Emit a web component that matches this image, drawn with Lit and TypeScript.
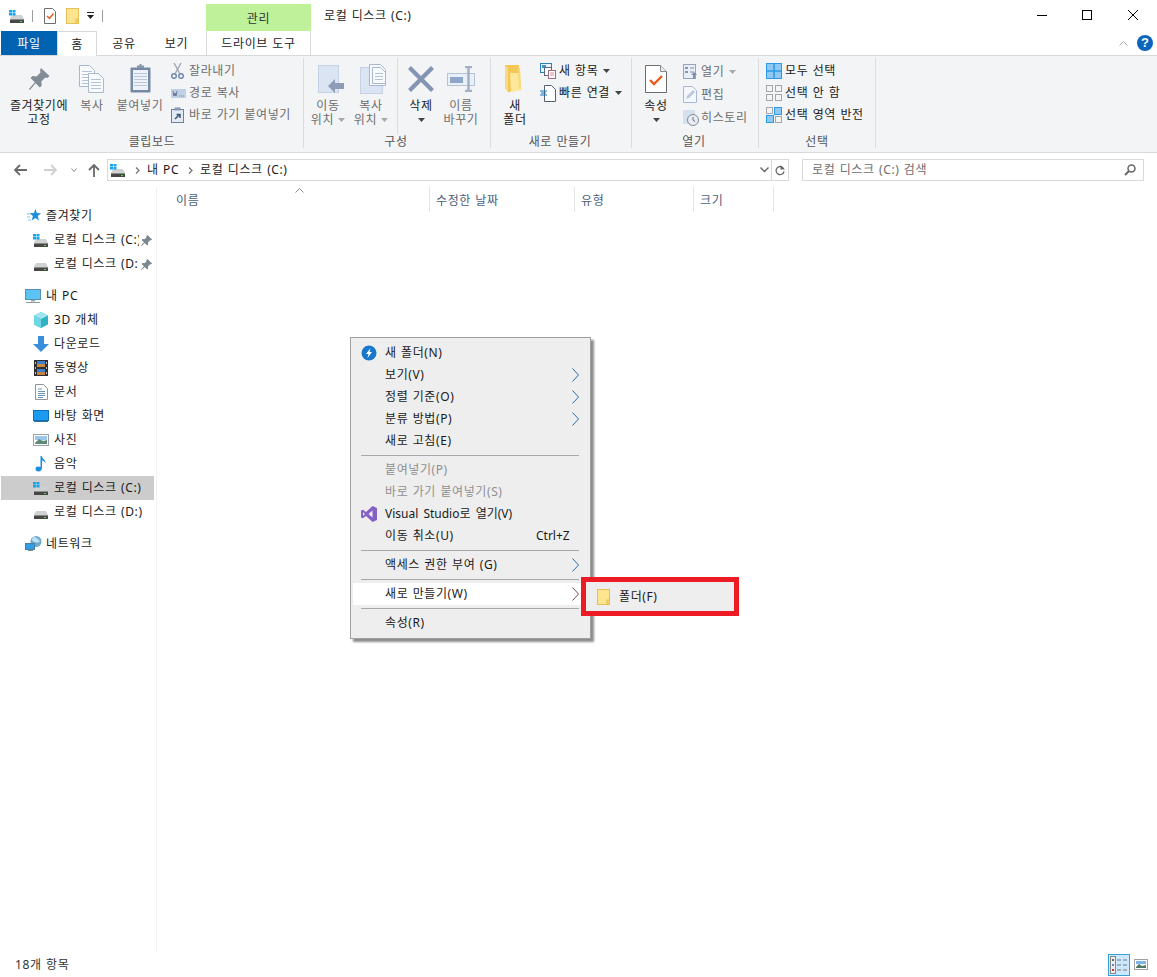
import { LitElement, html, css, svg, nothing } from "lit";
import { customElement } from "lit/decorators.js";

const ic = (w: number, h: number, body: unknown, vb?: string) =>
  html`<svg class="i" width=${w} height=${h} viewBox=${vb ?? `0 0 ${w} ${h}`}>${body}</svg>`;

const hdd = (win: boolean) => ic(16, 16, svg`
  <path d="M3 7h10l2 4H1z" fill="#cfd1d3"/><rect x="1" y="11" width="14" height="4" fill="#474747"/><rect x="1" y="11" width="14" height="1" fill="#8b8b8b"/>
  <rect x="11" y="13" width="2" height="1" fill="#3ee03e"/>
  ${win ? svg`<g fill="#16a3f2"><rect x="0" y="2" width="3" height="2.500"/><rect x="3.500" y="2" width="3" height="2.500"/><rect x="0" y="5" width="3" height="2.500"/><rect x="3.500" y="5" width="3" height="2.500"/></g>` : nothing}`);

const star = ic(16, 16, svg`<path d="M10.500 1l1.400 4 4.100.2-3.200 2.800 1.200 4.400-3.500-2.400-3.800 2.400 1.200-4.400-3.400-2.800 4.400-.2z" fill="#1f8fdc"/><path d="M2 6h3M2 9h3M3 12h3" stroke="#7cc3ef" stroke-width="1"/>`);
const pc = ic(17, 16, svg`<rect x=".5" y="1.500" width="15" height="10" fill="#5cc4f5" stroke="#5a8fb0"/><rect x="6" y="12" width="4" height="1.500" fill="#9aa7b0"/><rect x="1" y="14" width="14" height="1" fill="#8c9aa5"/>`);
const cube = ic(16, 16, svg`<path d="M8 0l7 3.500v9L8 16l-7-3.500v-9z" fill="#2fb3c4"/><path d="M8 0l7 3.500L8 7 1 3.500z" fill="#9fe6ee"/><path d="M1 3.500L8 7v9l-7-3.500z" fill="#6fd7e3"/>`);
const dl = ic(16, 16, svg`<path d="M5 0h6v8h5l-8 8-8-8h5z" fill="#3a8fdd"/>`);
const film = ic(14, 16, svg`<rect width="14" height="16" fill="#2f2f2f"/><rect x="3" y="1" width="8" height="6" fill="#d08a3e"/><rect x="3" y="1" width="8" height="3" fill="#3f7fd0"/><rect x="3" y="9" width="8" height="6" fill="#3f7fd0"/><rect x="3" y="12" width="8" height="3" fill="#c8803a"/><g fill="#bbb"><rect x="1" y="2" width="1" height="2"/><rect x="1" y="7" width="1" height="2"/><rect x="1" y="12" width="1" height="2"/><rect x="12" y="2" width="1" height="2"/><rect x="12" y="7" width="1" height="2"/><rect x="12" y="12" width="1" height="2"/></g>`);
const docu = ic(13, 16, svg`<path d="M.5.5h8l4 4v11H.5z" fill="#fff" stroke="#8e9499"/><path d="M3 5h4M3 7.500h7M3 9.500h7M3 11.500h7M3 13.500h5" stroke="#6a94b8"/>`);
const desk = ic(16, 16, svg`<rect x=".5" y="2.500" width="15" height="10" fill="#1c9aef" stroke="#0f6fb4"/><rect x="1" y="13" width="14" height="1" fill="#3a6f98"/>`);
const pics = ic(16, 12, svg`<rect x=".5" y=".5" width="15" height="11" fill="#fff" stroke="#98a0a8"/><rect x="2" y="2" width="12" height="4" fill="#9bc6ee"/><path d="M2 9l4-4 4 2 4-1v4H2z" fill="#5e8a78"/>`);
const note = ic(12, 16, svg`<ellipse cx="3.500" cy="13" rx="3" ry="2.400" fill="#1c8fe0"/><path d="M5.500 13V0h1.400c.3 3 4 3.500 3.600 7.500-.7-2-2.300-2.700-3.500-3V13z" fill="#1c8fe0"/>`);
const net = ic(17, 16, svg`<circle cx="11" cy="5.500" r="5.500" fill="#6ea9cf"/><path d="M8 1c3 0 6 2 7 5-3 1-7 .5-8-2z" fill="#bfe0ef"/><rect x=".5" y="7.500" width="9" height="6" fill="#2e9ee6" stroke="#4b7ea5"/><rect x="3" y="14" width="5" height="1" fill="#7f8d98"/>`);
const pinSm = ic(11, 11, svg`<path d="M6.500 0L11 4.500l-1 1-1-.2-2 2.200.2 2-1 1-2.500-2.500L.6 11 0 10.400l3-3.100L.5 5l1-1 2 .2 2-2L5.500 1z" fill="#7b8692"/>`);

const pin = ic(22, 24, svg`<path d="M13 1l8.500 8-2 2-2.200-.5-4 4 .5 4-2 2-4.300-4.300L2 23l-1-1 5.800-6.800L2.500 11l2-2 4 .5 4-4L12 3.200z" fill="#828c97"/>`);
const page = (x: number, y: number, w: number, h: number) => svg`<path d="M${x + .5} ${y + .5}h${w - 6}l5 5v${h - 6}h-${w - 1}z" fill="#f8fafd" stroke="#a9b8d0"/>${[6, 9, 12, 15, 18].filter((d) => d < h - 2).map((d) => svg`<path d="M${x + 3} ${y + d + .5}h${w - 6}" stroke="#b6c2d6"/>`)}`;
const copy = ic(26, 28, svg`${page(0, 0, 16, 22)}${page(9, 8, 16, 20)}`);
const clip = ic(21, 29, svg`<rect x="0.500" y="3.500" width="20" height="25" rx="1" fill="#7889a5"/><rect x="3" y="6" width="15" height="20" fill="#eef2f8"/><path d="M4 9.500h13M4 12.500h13M4 15.500h13M4 18.500h13M4 21.500h13" stroke="#bac7da"/><path d="M7 4V1.500h2.500V0h2v1.500H14V4z" fill="#8796ad"/>`);
const scissors = ic(13, 16, svg`<circle cx="3" cy="13" r="2.300" fill="none" stroke="#6d87ad" stroke-width="1.500"/><circle cx="10" cy="13" r="2.300" fill="none" stroke="#6d87ad" stroke-width="1.500"/><path d="M4 11L10 0M9 11L3 0" stroke="#9aa3ad" stroke-width="1.300"/>`);
const pathcopy = ic(15, 9, svg`<rect width="15" height="9" fill="#bfcfe6"/><path d="M2 2l1 5 1-3 1 3 1-5M8 7h.8M10 7h.8M12 7h.8" stroke="#53657f" fill="none" stroke-width=".8"/>`);
const shortcut = ic(13, 16, svg`<rect x=".5" y="2.500" width="12" height="13" fill="#e4eaf3" stroke="#6f7f99"/><rect x="3.500" y=".5" width="6" height="3" fill="#8798b0"/><path d="M4 12l4-4M5.500 7.500H9V11" stroke="#3f5674" stroke-width="1.500" fill="none"/>`);
const move = ic(34, 28, svg`<rect x="1.500" y=".5" width="20" height="27" fill="#dbe4f2" stroke="#c5d1e4"/><path d="M11 21l7-7v4h9v6h-9v4z" fill="#8d9db6"/>`, "-6 0 34 28");
const copyto = ic(34, 30, svg`<rect x="0.500" y="3.500" width="22" height="26" fill="#dbe4f2" stroke="#c5d1e4"/>${page(9, 0, 17, 22)}${page(12, 3, 14, 17)}`, "-6 0 34 30");
const del = ic(26, 26, svg`<path d="M3 0l10 10L23 0l3 3-10 10 10 10-3 3-10-10L3 26l-3-3 10-10L0 3z" fill="#8594b2"/>`);
const rename = ic(28, 26, svg`<rect x=".5" y="7.500" width="27" height="12" fill="#eaf0f8" stroke="#b4c2d8"/><rect x="3" y="11" width="13" height="6" fill="#8fa6c8"/><path d="M18 1h7M21.500 1v24M18 25h7" stroke="#a3b0c6" stroke-width="2.500" fill="none"/>`);
const bigFolder = ic(20, 27, svg`<path d="M0 0h14v4l1 21L3 27 0 23z" fill="#f3c655"/><path d="M5 8h9l1-4 1 20 3 .5L6 27z" fill="#fce79a"/><path d="M0 0v23l3 4V3z" fill="#f6d98a"/><path d="M13 3h2l1 21h-2z" fill="#f8d874"/>`);
const newItem = ic(16, 16, svg`<rect x=".5" y=".5" width="11" height="9" fill="#e8f3fb" stroke="#2d7fb8"/><rect x="2" y="2" width="4" height="3" fill="#3e96cf"/><rect x="4.500" y="4.500" width="7" height="8" fill="#fff" stroke="#59687c"/><rect x="8.500" y="7.500" width="7" height="8" fill="#fff" stroke="#a06a78"/><path d="M10 10h4M10 12h4" stroke="#d48a9a"/>`);
const quick = ic(16, 17, svg`<path d="M4.500.5h7l4 4v12h-11z" fill="#fff" stroke="#55606e"/><path d="M0 6h7M1 8h5M0 10h7" stroke="#1b78c0"/>`);
const props = ic(22, 28, svg`<path d="M.5.5h15l6 6v21H.5z" fill="#fff" stroke="#6d6d6d"/><path d="M15.500.5v6h6" fill="#eee" stroke="#8a8a8a"/><path d="M5 15l4 4 8-8" stroke="#ee5a1c" stroke-width="2.400" fill="none"/>`);
const openI = ic(15, 16, svg`<rect x=".5" y=".5" width="12" height="14" fill="#e9eef6" stroke="#93a5c0"/><rect x="2" y="3" width="3" height="2" fill="#8094b3"/><rect x="2" y="7" width="3" height="2" fill="#8094b3"/><path d="M7 4h4M7 8h4" stroke="#8094b3"/><path d="M10 15v-4H8l3-3 3 3h-2v4z" fill="#7d8fa9"/>`);
const editI = ic(14, 17, svg`<path d="M.5.5h9l4 4v12H.5z" fill="#f4f7fb" stroke="#a7b7cf"/><path d="M3 13l1-3 6-6 2 2-6 6z" fill="#bcc9dc"/>`);
const histI = ic(16, 16, svg`<rect x="0" y="0" width="12" height="14" fill="#d6dfec"/><circle cx="10" cy="10" r="5.500" fill="#e9edf2" stroke="#7f8b99"/><path d="M10 7v3l2 1.500" stroke="#5f6b79" fill="none"/>`);
const cells = (fills: string[], stroke: string) => ic(16, 16, svg`${[[0, 0], [9, 0], [0, 9], [9, 9]].map(([x, y], n) => svg`<rect x=${x + .5} y=${y + .5} width="6" height="6" fill=${fills[n]} stroke=${stroke}/>`)}`);
const selAll = ic(16, 16, svg`<rect x=".5" y=".5" width="15" height="15" fill="#8fc8f2" stroke="#2b9be8"/><path d="M8 0v16M0 8h16" stroke="#2b9be8" stroke-width="1.500"/>`);
const selNone = cells(["#f3f4f6", "#f3f4f6", "#f3f4f6", "#f3f4f6"], "#a6a6a6");
const selInv = ic(16, 16, svg`<rect x="8.500" y=".5" width="7" height="7" fill="#8fc8f2" stroke="#2b9be8"/><rect x=".5" y="8.500" width="7" height="7" fill="#8fc8f2" stroke="#2b9be8"/><rect x=".5" y=".5" width="6" height="6" fill="#f3f4f6" stroke="#a6a6a6"/><rect x="9.500" y="9.500" width="6" height="6" fill="#f3f4f6" stroke="#a6a6a6"/>`);

const checkDoc = ic(12, 16, svg`<path d="M.5.5h8l3 3v12H.5z" fill="#fff" stroke="#6d6d6d"/><path d="M3 8l2.500 2.500L9.500 5.500" stroke="#ee5a1c" stroke-width="1.500" fill="none"/>`);
const smFolder = ic(13, 16, svg`<rect x=".5" y=".5" width="12" height="15" fill="#fde58f" stroke="#e6bf55"/><rect x="10" y="11" width="2.500" height="4.500" fill="#f7d36a" stroke="#e6bf55"/>`);
const caret = ic(7, 4, svg`<path d="M0 0h7L3.500 4z" fill="#444"/>`);
const caretG = ic(7, 4, svg`<path d="M0 0h7L3.500 4z" fill="#a8a8a8"/>`);
const qCaret = ic(7, 7, svg`<rect y="0" width="7" height="1" fill="#222"/><path d="M0 3h7L3.500 7z" fill="#222"/>`);
const chevR = ic(5, 7, svg`<path d="M1 .5L4 3.500 1 6.500" stroke="#777" stroke-width="1.300" fill="none"/>`);
const menuArrow = ic(7, 14, svg`<path d="M.5.5L6.500 7 .5 13.500" stroke="#2c6aa8" stroke-width="1" fill="none"/>`);
const hotArrow = ic(7, 14, svg`<path d="M.5.5L6.500 7 .5 13.500" stroke="#7a4a4a" stroke-width="1" fill="none"/>`);
const boltI = ic(16, 16, svg`<circle cx="8" cy="8" r="7.500" fill="#1677cc"/><path d="M9.500 3L5 9h2.500L6.500 13 11 7H8.500z" fill="#fff"/>`);
const vsI = ic(16, 16, svg`<path d="M11.500 0L16 2v12l-4.500 2L5 10l-3 2.300L0 11.500v-7L2 3.700 5 6zM11.500 4.500L7.500 8l4 3.500zM2 6.200v3.600L4 8z" fill="#8661c5"/>`);

interface Big { icon: unknown; lines: unknown[]; off?: boolean; w: string }
interface Small { icon: unknown; text: string; off?: boolean; caret?: unknown }

const clipBig: Big[] = [
  { icon: pin, lines: ["즐겨찾기에", "고정"], w: "w62" },
  { icon: copy, lines: ["복사"], off: true, w: "w44" },
  { icon: clip, lines: ["붙여넣기"], off: true, w: "w52" },
];
const clipSmall: Small[] = [
  { icon: scissors, text: "잘라내기", off: true },
  { icon: pathcopy, text: "경로 복사", off: true },
  { icon: shortcut, text: "바로 가기 붙여넣기", off: true },
];
const newSmall: Small[] = [
  { icon: newItem, text: "새 항목", caret },
  { icon: quick, text: "빠른 연결", caret },
];
const openSmall: Small[] = [
  { icon: openI, text: "열기", off: true, caret: caretG },
  { icon: editI, text: "편집", off: true },
  { icon: histI, text: "히스토리", off: true },
];
const selSmall: Small[] = [
  { icon: selAll, text: "모두 선택" },
  { icon: selNone, text: "선택 안 함" },
  { icon: selInv, text: "선택 영역 반전" },
];

const navRows: { icon: unknown; text: string; lvl: number; gap?: boolean; sel?: boolean; pin?: boolean }[] = [
  { icon: star, text: "즐겨찾기", lvl: 0 },
  { icon: hdd(true), text: "로컬 디스크 (C:)", lvl: 1, pin: true },
  { icon: hdd(false), text: "로컬 디스크 (D:)", lvl: 1, pin: true },
  { icon: pc, text: "내 PC", lvl: 0, gap: true },
  { icon: cube, text: "3D 개체", lvl: 1 },
  { icon: dl, text: "다운로드", lvl: 1 },
  { icon: film, text: "동영상", lvl: 1 },
  { icon: docu, text: "문서", lvl: 1 },
  { icon: desk, text: "바탕 화면", lvl: 1 },
  { icon: pics, text: "사진", lvl: 1 },
  { icon: note, text: "음악", lvl: 1 },
  { icon: hdd(true), text: "로컬 디스크 (C:)", lvl: 1, sel: true },
  { icon: hdd(false), text: "로컬 디스크 (D:)", lvl: 1 },
  { icon: net, text: "네트워크", lvl: 0, gap: true },
];

type MI = { sep: true } | { sep?: false; t: string; icon?: unknown; arrow?: boolean; off?: boolean; key?: string; hot?: boolean; lat?: boolean };
const menu: MI[] = [
  { t: "새 폴더(N)", icon: boltI },
  { t: "보기(V)", arrow: true },
  { t: "정렬 기준(O)", arrow: true },
  { t: "분류 방법(P)", arrow: true },
  { t: "새로 고침(E)" },
  { sep: true },
  { t: "붙여넣기(P)", off: true },
  { t: "바로 가기 붙여넣기(S)", off: true },
  { t: "Visual Studio로 열기(V)", icon: vsI, lat: true },
  { t: "이동 취소(U)", key: "Ctrl+Z" },
  { sep: true },
  { t: "액세스 권한 부여 (G)", arrow: true },
  { sep: true },
  { t: "새로 만들기(W)", arrow: true, hot: true },
  { sep: true },
  { t: "속성(R)" },
];

@customElement("app-root")
export class AppRoot extends LitElement {
  static styles = css`
    :host { display: block; width: 1157px; height: 977px; position: relative; overflow: hidden; background: #fff;
      font: 12px/14px "Noto Sans", "Noto Sans CJK KR", sans-serif; color: #1a1a1a; letter-spacing: .6px; word-spacing: .7px; }
    .i { display: block; flex: none; }
    .app { display: flex; flex-direction: column; height: 977px; }

    .title { display: flex; height: 31px; flex: none; }
    .qa { display: flex; align-items: center; width: 206px; padding-left: 9px; box-sizing: border-box; }
    .qa .vs { width: 1px; height: 12px; background: #a0a0a0; }
    .qa .ml7 { margin-left: 7px; } .qa .ml11 { margin-left: 11px; } .qa .ml10 { margin-left: 10px; } .qa .ml8 { margin-left: 8px; }
    .manage { width: 105px; height: 27px; margin-top: 4px; padding-top: 2px; box-sizing: border-box; background: #bff09a; display: flex; align-items: center; justify-content: center; color: #333; }
    .wintitle { margin-left: 13px; display: flex; align-items: center; flex: 1; }
    .winbtns { display: flex; align-items: center; padding: 0 19px 1px 0; }
    .winbtns .mn { margin-right: 35px; } .winbtns .mx { margin-right: 36px; }

    .tabs { display: flex; height: 25px; flex: none; box-sizing: border-box; border-bottom: 1px solid #d9d9d9; padding-left: 1px; align-items: stretch; }
    .tab { display: flex; align-items: center; justify-content: center; color: #222; box-sizing: border-box; padding-top: 2px; }
    .t-file { width: 56px; background: #0063b1; color: #fff; }
    .t-home { width: 40px; height: 25px; background: #fff; border: 1px solid #d9d9d9; border-bottom: 0; }
    .t-share { width: 54px; }
    .t-view { width: 51px; margin-right: 4px; }
    .t-drive { width: 105px; border: 1px solid #d9d9d9; border-width: 0 1px; }
    .tabs .right { margin-left: auto; display: flex; align-items: center; padding-right: 4px; gap: 9px; }
    .help { width: 16px; height: 16px; border-radius: 50%; background: #0a66bd; color: #fff; font: bold 13px/16px "Liberation Sans", sans-serif; letter-spacing: 0; text-align: center; }

    .ribbon { display: flex; height: 97px; flex: none; box-sizing: border-box; background: #f3f4f6; border-bottom: 1px solid #d9d9d9; padding: 2px 0 0 1px; }
    .group { height: 90px; display: flex; flex-direction: column; box-sizing: border-box; border-right: 1px solid #dcdcdc; }
    .g1 { width: 303px; padding-left: 7px; }
    .g2 { width: 187px; padding-left: 2px; }
    .g3 { width: 141px; padding-left: 4px; }
    .g4 { width: 127px; padding-left: 4px; }
    .g5 { width: 117px; padding-left: 7px; }
    .gbody { display: flex; height: 76px; flex: none; }
    .glabel { height: 14px; line-height: 16px; text-align: center; color: #555; margin-left: -7px; }
    .g2 .glabel { margin-left: -4px; } .g3 .glabel, .g4 .glabel { margin-left: -6px; }
    .big { display: flex; flex-direction: column; align-items: center; flex: none; color: #1a1a1a; white-space: nowrap; }
    .big.off { color: #6d6d6d; }
    .w62 { width: 62px; } .w44 { width: 44px; } .w52 { width: 52px; } .w42 { width: 42px; } .w40 { width: 40px; }
    .bi { height: 41px; display: flex; align-items: center; justify-content: center; flex: none; }
    .ln { display: flex; align-items: center; gap: 4px; height: 14px; }
    .arrowln { display: flex; align-items: center; height: 14px; }
    .vsep { width: 1px; height: 76px; background: #dcdcdc; margin: 0 3px 0 5px; flex: none; }
    .smalls { display: flex; flex-direction: column; padding: 2px 0 0 5px; }
    .smalls.s7 { padding-left: 7px; padding-top: 2px; }
    .g5 .smalls { padding-left: 0; }
    .sm { display: flex; align-items: center; height: 22px; white-space: nowrap; color: #1a1a1a; }
    .s7 .sm { height: 23px; }
    .sm.off { color: #6d6d6d; }
    .sm .ii { width: 18px; display: flex; justify-content: flex-start; align-items: center; flex: none; }
    .g3 .sm .ii, .g5 .sm .ii { width: 19px; }
    .sm .c { margin-left: 5px; }

    .addr { display: flex; height: 34px; flex: none; padding-top: 6px; box-sizing: border-box; }
    .navs { width: 107px; display: flex; align-items: center; height: 22px; flex: none; padding-left: 14px; box-sizing: border-box; }
    .navs .f { margin-left: 17px; } .navs .d { margin-left: 14px; } .navs .u { margin-left: 11px; }
    .box { height: 22px; box-sizing: border-box; border: 1px solid #d9d9d9; display: flex; align-items: center; }
    .path { width: 682px; flex: none; padding-left: 2px; }
    .path span { white-space: nowrap; }
    .path .c { margin: 0 7px 0 9px; }
    .path .pend { margin-left: auto; display: flex; align-items: center; height: 100%; }
    .path .rf { width: 16px; height: 20px; border-left: 1px solid #d9d9d9; display: flex; align-items: center; justify-content: center; }
    .path .dd { margin-right: 2px; }
    .search { width: 342px; margin-left: 13px; flex: none; padding: 0 7px 0 9px; color: #6d6d6d; justify-content: space-between; }

    .body { flex: 1; display: flex; min-height: 0; }
    .side { width: 157px; flex: none; box-sizing: border-box; border-right: 1px solid #f0f0f0; padding-top: 17px; }
    .row { display: flex; align-items: center; height: 24px; margin-left: 1px; margin-right: 2px; box-sizing: border-box; color: #1a1a1a; }
    .row.gap { margin-top: 8px; }
    .row.sel { background: #cccccc; }
    .row .ibox { width: 16px; margin-right: 5px; display: flex; justify-content: center; flex: none; }
    .row.l0 { padding-left: 24px; }
    .row.l1 { padding-left: 32px; padding-right: 2px; }
    .row .nm { flex: 1; overflow: hidden; white-space: nowrap; min-width: 0; line-height: 20px; }
    .row .pn { margin-left: 2px; }

    .main { flex: 1; min-width: 0; }
    .cols { display: flex; height: 26px; color: #4c607a; }
    .col { box-sizing: border-box; border-right: 1px solid #e5e5e5; display: flex; align-items: center; padding: 2px 0 0 6px; position: relative; height: 25px; }
    .cn { width: 273px; padding-left: 19px; } .cd { width: 145px; } .ct { width: 119px; } .cs { width: 80px; }
    .sort { position: absolute; left: 138px; top: 1px; }

    .status { height: 25px; flex: none; display: flex; align-items: center; padding-left: 15px; color: #333; }
    .status .views { margin-left: auto; display: flex; align-items: center; padding-right: 9px; gap: 4px; }
    .vbtn { width: 22px; height: 22px; box-sizing: border-box; background: #cce8ff; border: 1px solid #3aa0dc; display: flex; align-items: center; justify-content: center; }

    .menu { position: absolute; left: 350px; top: 337px; width: 241px; height: 302px; box-sizing: border-box; background: #eeeeee; border: 1px solid #a0a0a0; box-shadow: 3px 3px 2px rgba(0,0,0,.45); padding: 4px 2px 2px; }
    .mi { height: 22px; display: flex; align-items: center; position: relative; padding-left: 32px; color: #1a1a1a; white-space: pre; }
    .mi.lat { letter-spacing: 0; word-spacing: 2px; }
    .mi.off { color: #8e8e8e; }
    .mi.hot { background: #fff; margin-right: -1px; }
    .mi .mic { position: absolute; left: 8px; top: 3px; }
    .mi .ar { position: absolute; left: 219px; top: 4px; }
    .mi .key { position: absolute; left: 183px; letter-spacing: 0; }
    .ms { height: 7px; display: flex; align-items: center; padding: 0 8px; }
    .ms i { display: block; height: 1px; width: 218px; background: #a8a8a8; }
    .sub { position: absolute; left: 581px; top: 577px; width: 158px; height: 39px; box-sizing: border-box; border: 5px solid #ed1c24; background: #eeeeee; display: flex; align-items: center; padding-left: 11px; gap: 9px; }
  `;

  private big(b: Big) {
    return html`<div class="big ${b.w} ${b.off ? "off" : ""}">
      <div class="bi">${b.icon}</div>
      ${b.lines.map((l) => html`<div class="ln">${l}</div>`)}
    </div>`;
  }

  private small(s: Small) {
    return html`<div class="sm ${s.off ? "off" : ""}"><span class="ii">${s.icon}</span><span>${s.text}</span>${s.caret ? html`<span class="c">${s.caret}</span>` : nothing}</div>`;
  }

  private arrowBig(icon: unknown, a: string, b: string, w: string, off: boolean) {
    return html`<div class="big ${w} ${off ? "off" : ""}"><div class="bi">${icon}</div>
      <div class="ln">${a}</div><div class="ln">${b}${caretG}</div></div>`;
  }

  render() {
    return html`<div class="app">
      <div class="title">
        <div class="qa">
          ${hdd(true)}
          <span class="vs ml7"></span>
          <span class="ml11">${checkDoc}</span>
          <span class="ml10">${smFolder}</span>
          <span class="ml8">${qCaret}</span>
          <span class="vs ml8"></span>
        </div>
        <div class="manage">관리</div>
        <div class="wintitle">로컬 디스크 (C:)</div>
        <div class="winbtns">
          <span class="mn">${ic(10, 10, svg`<rect y="5" width="10" height="1" fill="#000"/>`)}</span>
          <span class="mx">${ic(10, 10, svg`<rect x=".5" y=".5" width="9" height="9" fill="none" stroke="#000"/>`)}</span>
          ${ic(10, 10, svg`<path d="M0 0l10 10M10 0L0 10" stroke="#000" fill="none"/>`)}
        </div>
      </div>
      <div class="tabs">
        <div class="tab t-file">파일</div>
        <div class="tab t-home">홈</div>
        <div class="tab t-share">공유</div>
        <div class="tab t-view">보기</div>
        <div class="tab t-drive">드라이브 도구</div>
        <div class="right">
          ${ic(9, 5, svg`<path d="M.5 4.500L4.500.5l4 4" stroke="#a8a8a8" fill="none"/>`)}
          <div class="help">?</div>
        </div>
      </div>
      <div class="ribbon">
        <div class="group g1">
          <div class="gbody">${clipBig.map((b) => this.big(b))}<div class="smalls">${clipSmall.map((s) => this.small(s))}</div></div>
          <div class="glabel">클립보드</div>
        </div>
        <div class="group g2">
          <div class="gbody">
            ${this.arrowBig(move, "이동", "위치", "w44", true)}
            ${this.arrowBig(copyto, "복사", "위치", "w42", true)}
            <div class="vsep"></div>
            <div class="big w40"><div class="bi">${del}</div><div class="ln">삭제</div><div class="arrowln">${caret}</div></div>
            ${this.big({ icon: rename, lines: ["이름", "바꾸기"], off: true, w: "w40" })}
          </div>
          <div class="glabel">구성</div>
        </div>
        <div class="group g3">
          <div class="gbody">
            ${this.big({ icon: bigFolder, lines: ["새", "폴더"], w: "w40" })}
            <div class="smalls">${newSmall.map((s) => this.small(s))}</div>
          </div>
          <div class="glabel">새로 만들기</div>
        </div>
        <div class="group g4">
          <div class="gbody">
            <div class="big w40"><div class="bi">${props}</div><div class="ln">속성</div><div class="arrowln">${caret}</div></div>
            <div class="smalls s7">${openSmall.map((s) => this.small(s))}</div>
          </div>
          <div class="glabel">열기</div>
        </div>
        <div class="group g5">
          <div class="gbody"><div class="smalls">${selSmall.map((s) => this.small(s))}</div></div>
          <div class="glabel">선택</div>
        </div>
      </div>
      <div class="addr">
        <div class="navs">
          ${ic(13, 12, svg`<path d="M6 1L1 6l5 5M1 6h12" stroke="#6a6a6a" stroke-width="1.800" fill="none"/>`)}
          <span class="f">${ic(13, 12, svg`<path d="M7 1l5 5-5 5M12 6H0" stroke="#d0d0d0" stroke-width="1.800" fill="none"/>`)}</span>
          <span class="d">${ic(6, 5, svg`<path d="M.5.5L3 3.500 5.500.5" stroke="#8a8a8a" fill="none"/>`)}</span>
          <span class="u">${ic(12, 13, svg`<path d="M1 6l5-5 5 5M6 1v12" stroke="#6a6a6a" stroke-width="1.800" fill="none"/>`)}</span>
        </div>
        <div class="box path">
          ${hdd(true)}
          <span class="c">${chevR}</span><span>내 PC</span>
          <span class="c">${chevR}</span><span>로컬 디스크 (C:)</span>
          <div class="pend">
            <span class="dd">${ic(9, 6, svg`<path d="M.5.5L4.500 4.500 8.500.5" stroke="#666" stroke-width="1.400" fill="none"/>`)}</span>
            <span class="rf">${ic(10, 11, svg`<path d="M8.500 3.500A4 4 0 1 0 9 6.500" stroke="#666" stroke-width="1.300" fill="none"/><path d="M5.500 0v4.500H10z" fill="#666"/>`)}</span>
          </div>
        </div>
        <div class="box search"><span>로컬 디스크 (C:) 검색</span>
          ${ic(12, 12, svg`<circle cx="7.500" cy="4.500" r="3.500" fill="none" stroke="#666" stroke-width="1.500"/><path d="M5 7l-4 4" stroke="#666" stroke-width="2"/>`)}
        </div>
      </div>
      <div class="body">
        <div class="side">
          ${navRows.map((r) => html`<div class="row l${r.lvl} ${r.gap ? "gap" : ""} ${r.sel ? "sel" : ""}">
            <span class="ibox">${r.icon}</span><span class="nm">${r.text}</span>
            ${r.pin ? html`<span class="pn">${pinSm}</span>` : nothing}
          </div>`)}
        </div>
        <div class="main">
          <div class="cols">
            <div class="col cn">이름<span class="sort">${ic(9, 5, svg`<path d="M.5 4.500L4.500.5l4 4" stroke="#8a8a8a" fill="none"/>`)}</span></div>
            <div class="col cd">수정한 날짜</div>
            <div class="col ct">유형</div>
            <div class="col cs">크기</div>
          </div>
        </div>
      </div>
      <div class="status">18개 항목
        <div class="views">
          <div class="vbtn">${ic(18, 18, svg`<rect x=".5" y=".5" width="5" height="17" fill="#eee" stroke="#888"/><rect x="2" y="3" width="2" height="2" fill="#666"/><rect x="2" y="8" width="2" height="2" fill="#5a86d8"/><rect x="2" y="13" width="2" height="2" fill="#d03030"/><path d="M7 4h4M13 4h4M7 9h4M13 9h4M7 14h4M13 14h4" stroke="#777"/>`)}</div>
          ${ic(14, 11, svg`<rect x=".5" y=".5" width="13" height="10" fill="#fff" stroke="#a0a0a0"/><rect x="2" y="2" width="10" height="3" fill="#7fb4ea"/><path d="M2 8l3-3 3 2 4-1v3H2z" fill="#4f7a68"/>`)}
        </div>
      </div>
    </div>
    <div class="menu">
      ${menu.map((m) => m.sep ? html`<div class="ms"><i></i></div>` : html`<div class="mi ${m.off ? "off" : ""} ${m.hot ? "hot" : ""} ${m.lat ? "lat" : ""}">${m.icon ? html`<span class="mic">${m.icon}</span>` : nothing}${m.t}${m.key ? html`<span class="key">${m.key}</span>` : nothing}${m.arrow ? html`<span class="ar">${m.hot ? hotArrow : menuArrow}</span>` : nothing}</div>`)}
    </div>
    <div class="sub">${smFolder}<span>폴더(F)</span></div>`;
  }
}
